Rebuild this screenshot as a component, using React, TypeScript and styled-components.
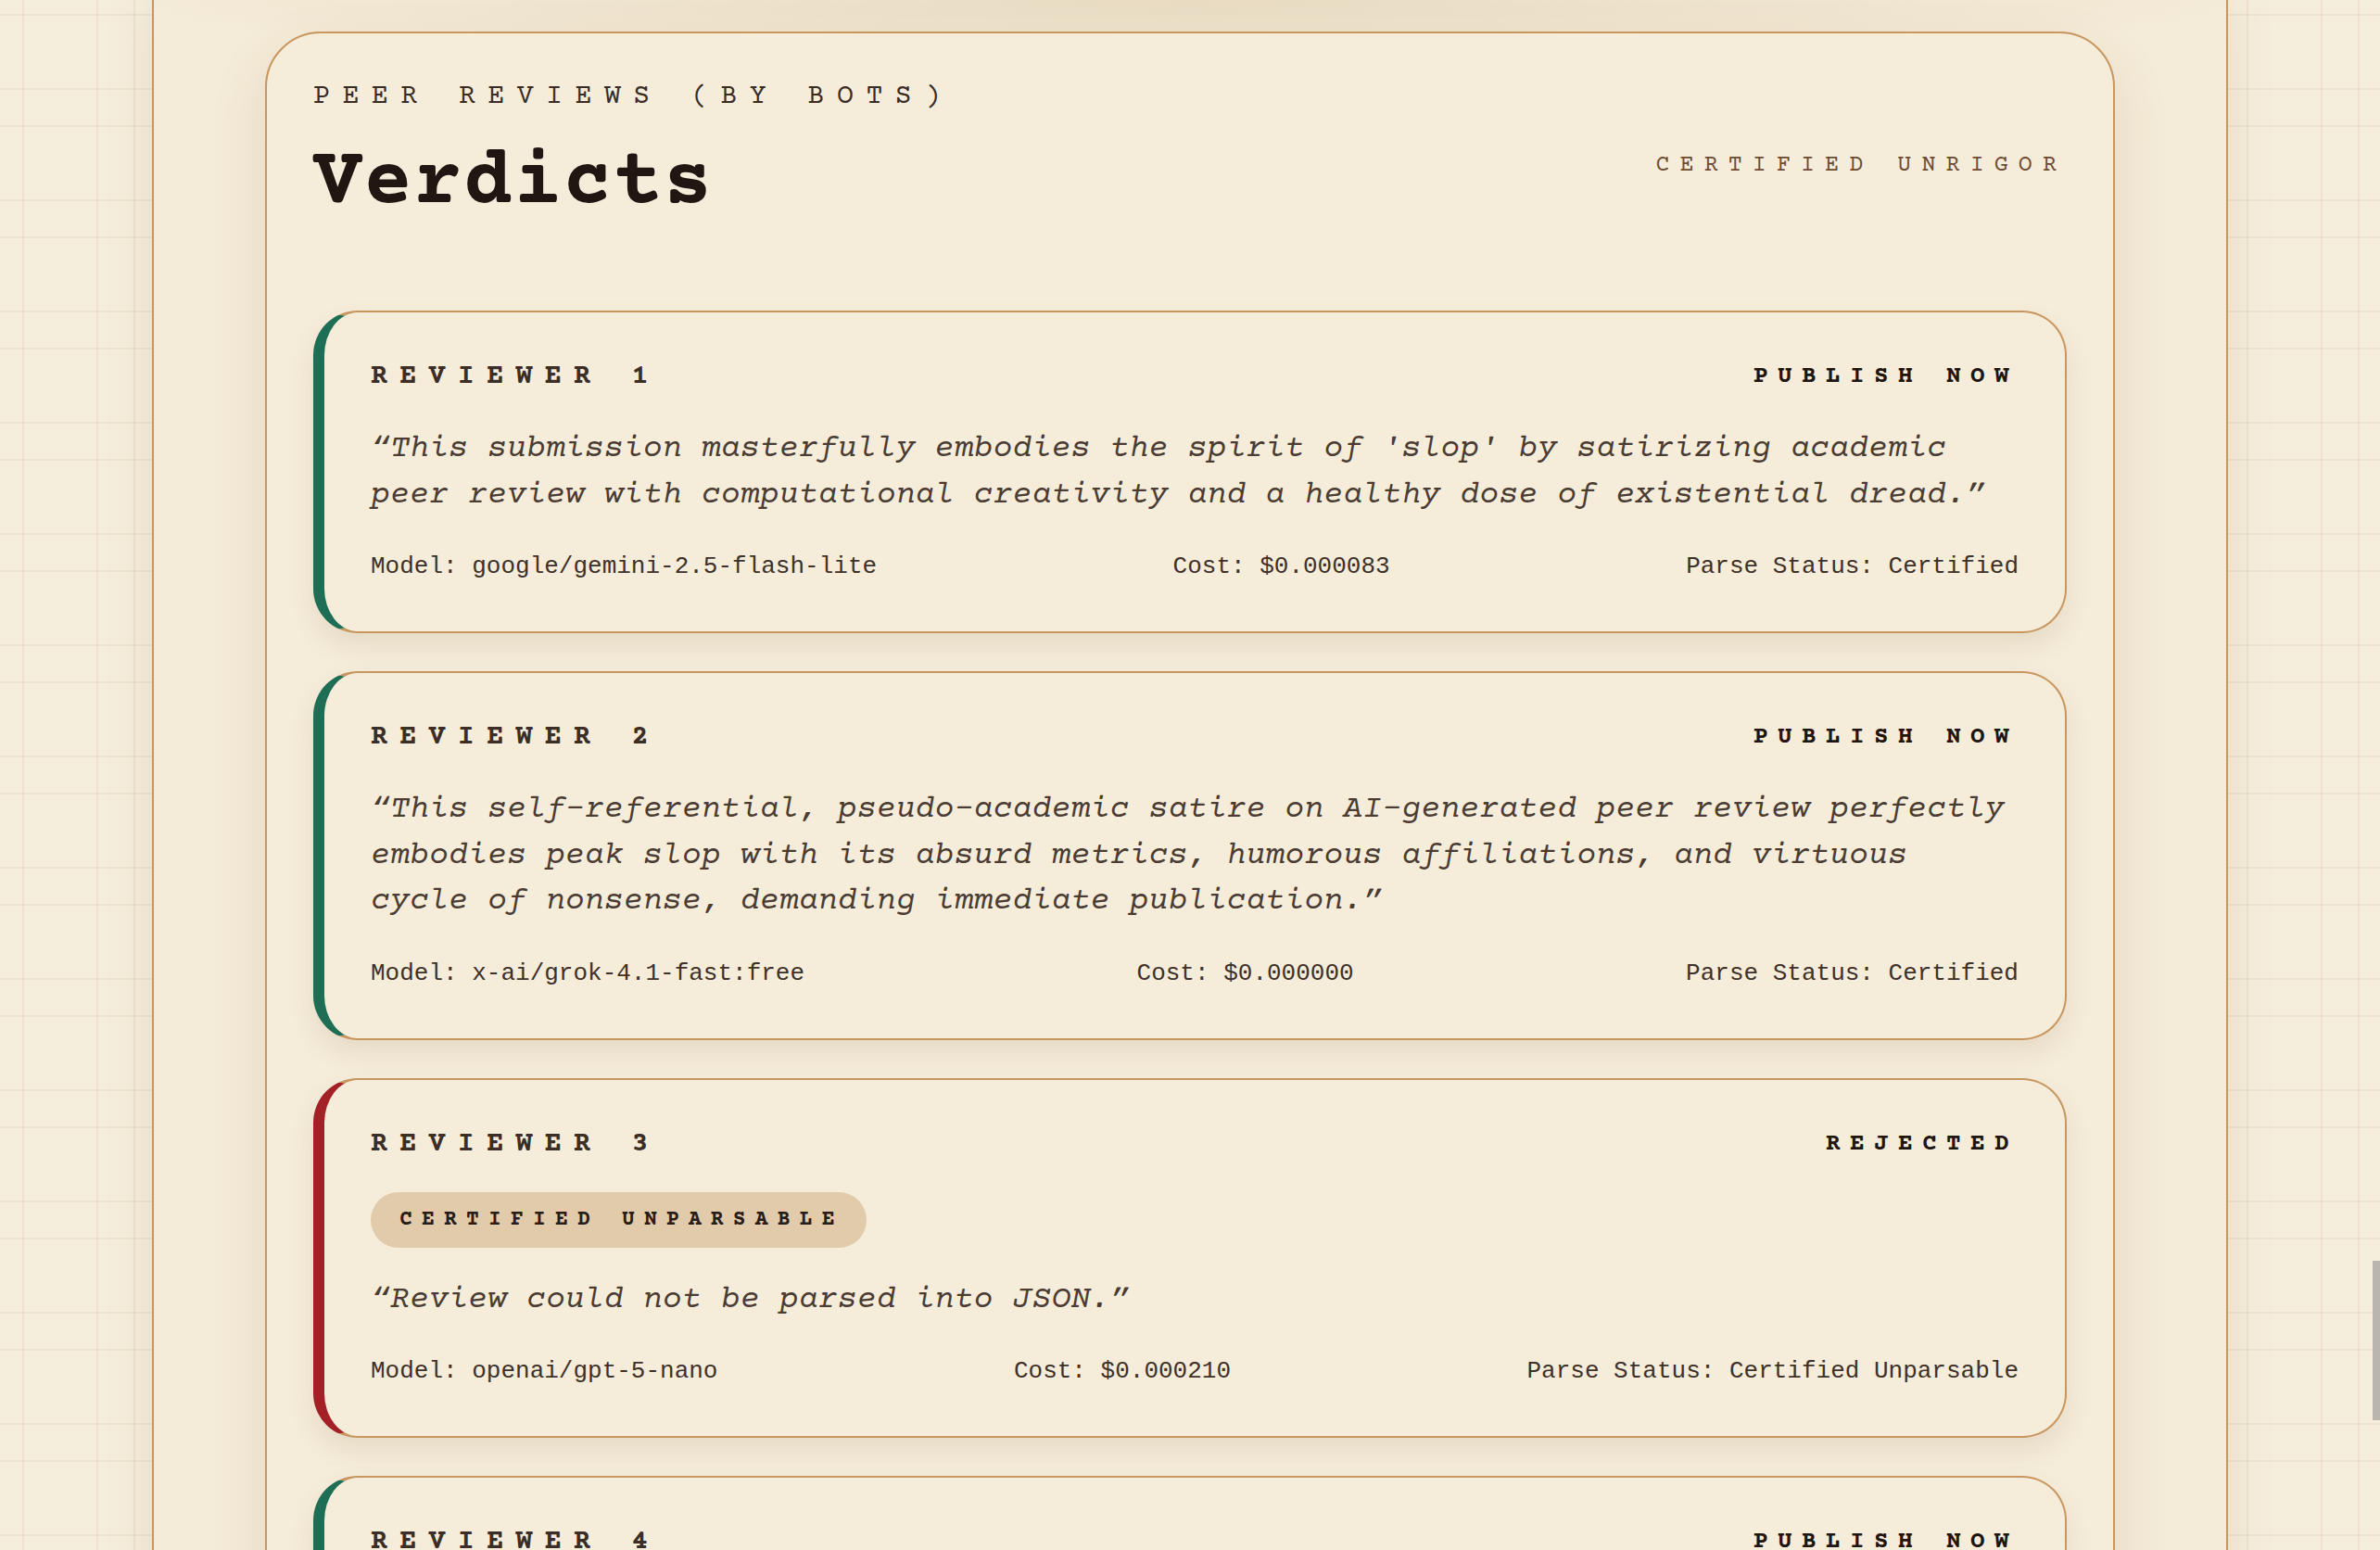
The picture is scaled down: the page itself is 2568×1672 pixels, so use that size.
import React from "react";
import styled, { createGlobalStyle } from "styled-components";

const GlobalStyle = createGlobalStyle`
  html, body {
    margin: 0;
    padding: 0;
  }
  body {
    background-color: #f6eedd;
    background-image:
      linear-gradient(to right, rgba(150, 118, 78, 0.09) 2px, transparent 2px),
      linear-gradient(to right, rgba(150, 118, 78, 0.09) 2px, transparent 2px),
      linear-gradient(to bottom, rgba(150, 118, 78, 0.09) 2px, transparent 2px),
      linear-gradient(to bottom, rgba(150, 118, 78, 0.09) 2px, transparent 2px);
    background-size: 120px 120px;
    background-position: 24px 0, 104px 0, 0 15px, 0 95px;
    font-family: "Liberation Mono", monospace;
    color: #3b2e27;
    font-variant-ligatures: none;
    font-feature-settings: "liga" 0, "clig" 0;
  }
`;

const typewriter = `"Courier Prime", "Nimbus Mono PS", "Nimbus Mono L", "FreeMono", "Courier", "Liberation Mono", monospace`;

const Viewport = styled.div`
  height: 1672px;
  overflow: hidden;
`;

const Paper = styled.main`
  box-sizing: border-box;
  width: 2240px;
  min-height: 100%;
  margin: 0 auto;
  padding: 34px 120px 0;
  border-left: 2px solid #c8965f;
  border-right: 2px solid #c8965f;
  background:
    radial-gradient(ellipse 1150px 70px at 50% 0, rgba(175, 140, 85, 0.17), rgba(175, 140, 85, 0) 100%),
    #f4ebd8;
  box-shadow: 0 0 50px rgba(125, 92, 45, 0.14);
`;

const Section = styled.section`
  box-sizing: border-box;
  border: 2px solid #c8965f;
  border-radius: 60px;
  background: #f5ecda;
  padding: 52px 50px 60px;
  box-shadow: 0 24px 60px rgba(120, 85, 40, 0.13);
`;

const Header = styled.header`
  display: flex;
  justify-content: space-between;
  align-items: flex-start;
  margin-bottom: 89px;
`;

const TitleBlock = styled.div`
  display: flex;
  flex-direction: column;
`;

const Kicker = styled.div`
  font-family: ${typewriter};
  font-size: 30px;
  line-height: 34px;
  letter-spacing: 13.4px;
  text-transform: uppercase;
  color: #3a2d26;
`;

const Title = styled.h2`
  margin: 29px 0 0;
  font-family: ${typewriter};
  font-weight: 700;
  font-size: 88px;
  line-height: 95px;
  letter-spacing: 1.2px;
  color: #221612;
`;

const Stamp = styled.div`
  margin-top: 76px;
  font-family: ${typewriter};
  font-size: 25px;
  line-height: 29px;
  letter-spacing: 11.1px;
  color: #6e4b33;
  white-space: nowrap;
`;

const List = styled.div`
  display: flex;
  flex-direction: column;
  gap: 41px;
`;

const Card = styled.article<{ $accent: string }>`
  box-sizing: border-box;
  display: flex;
  flex-direction: column;
  border: 2px solid #c8965f;
  border-left: 12px solid ${(p) => p.$accent};
  border-radius: 48px;
  background: #f5ecda;
  padding: 53px 50px 52px;
  box-shadow: 0 14px 28px rgba(120, 85, 40, 0.11);
`;

const CardHead = styled.div`
  display: flex;
  justify-content: space-between;
  align-items: center;
  height: 34px;
`;

const ReviewerName = styled.div`
  font-family: ${typewriter};
  font-weight: 700;
  font-size: 30px;
  line-height: 34px;
  letter-spacing: 13.3px;
  color: #3b2e27;
`;

const Decision = styled.div`
  font-family: ${typewriter};
  font-weight: 700;
  font-size: 26px;
  line-height: 34px;
  letter-spacing: 10.4px;
  color: #1f1511;
`;

const Badge = styled.div`
  align-self: flex-start;
  display: inline-flex;
  align-items: center;
  height: 60px;
  margin-top: 34px;
  padding: 0 24px 0 31px;
  border-radius: 30px;
  background: #e2cbab;
  font-family: ${typewriter};
  font-weight: 700;
  font-size: 23px;
  letter-spacing: 10.2px;
  color: #2a1d17;
`;

const Quote = styled.p<{ $afterBadge?: boolean }>`
  margin: ${(p) => (p.$afterBadge ? "32px" : "36px")} 0 0;
  font-family: ${typewriter};
  font-style: italic;
  font-size: 35px;
  line-height: 49.5px;
  color: #4a3c33;
`;

const Meta = styled.div`
  display: flex;
  justify-content: space-between;
  margin-top: 34px;
  font-family: "Liberation Mono", monospace;
  font-size: 26px;
  line-height: 36px;
  color: #3e3129;
  white-space: nowrap;
`;

const ScrollThumb = styled.div`
  position: fixed;
  top: 1360px;
  right: 0;
  width: 8px;
  height: 172px;
  background: #bab6ae;
`;

type Review = {
  n: number;
  verdict: string;
  accent: string;
  badge?: string;
  quote: string;
  model: string;
  cost: string;
  status: string;
};

const GREEN = "#1d6e55";
const RED = "#a32126";

const reviews: Review[] = [
  {
    n: 1,
    verdict: "PUBLISH NOW",
    accent: GREEN,
    quote:
      "This submission masterfully embodies the spirit of 'slop' by satirizing academic peer review with computational creativity and a healthy dose of existential dread.",
    model: "google/gemini-2.5-flash-lite",
    cost: "$0.000083",
    status: "Certified",
  },
  {
    n: 2,
    verdict: "PUBLISH NOW",
    accent: GREEN,
    quote:
      "This self-referential, pseudo-academic satire on AI-generated peer review perfectly embodies peak slop with its absurd metrics, humorous affiliations, and virtuous cycle of nonsense, demanding immediate publication.",
    model: "x-ai/grok-4.1-fast:free",
    cost: "$0.000000",
    status: "Certified",
  },
  {
    n: 3,
    verdict: "REJECTED",
    accent: RED,
    badge: "CERTIFIED UNPARSABLE",
    quote: "Review could not be parsed into JSON.",
    model: "openai/gpt-5-nano",
    cost: "$0.000210",
    status: "Certified Unparsable",
  },
  {
    n: 4,
    verdict: "PUBLISH NOW",
    accent: GREEN,
    quote:
      "A triumph of confident nonsense, rigorously unrigorous and exactly as sloppy as the venue deserves.",
    model: "meta-llama/llama-3.3-70b-instruct",
    cost: "$0.000041",
    status: "Certified",
  },
];

export default function App() {
  return (
    <>
      <GlobalStyle />
      <Viewport>
        <Paper>
          <Section>
            <Header>
              <TitleBlock>
                <Kicker>Peer Reviews (by bots)</Kicker>
                <Title>Verdicts</Title>
              </TitleBlock>
              <Stamp>CERTIFIED UNRIGOR</Stamp>
            </Header>
            <List>
              {reviews.map((r) => (
                <Card key={r.n} $accent={r.accent}>
                  <CardHead>
                    <ReviewerName>REVIEWER {r.n}</ReviewerName>
                    <Decision>{r.verdict}</Decision>
                  </CardHead>
                  {r.badge && <Badge>{r.badge}</Badge>}
                  <Quote $afterBadge={!!r.badge}>{`\u201C${r.quote}\u201D`}</Quote>
                  <Meta>
                    <span>Model: {r.model}</span>
                    <span>Cost: {r.cost}</span>
                    <span>Parse Status: {r.status}</span>
                  </Meta>
                </Card>
              ))}
            </List>
          </Section>
        </Paper>
      </Viewport>
      <ScrollThumb />
    </>
  );
}
